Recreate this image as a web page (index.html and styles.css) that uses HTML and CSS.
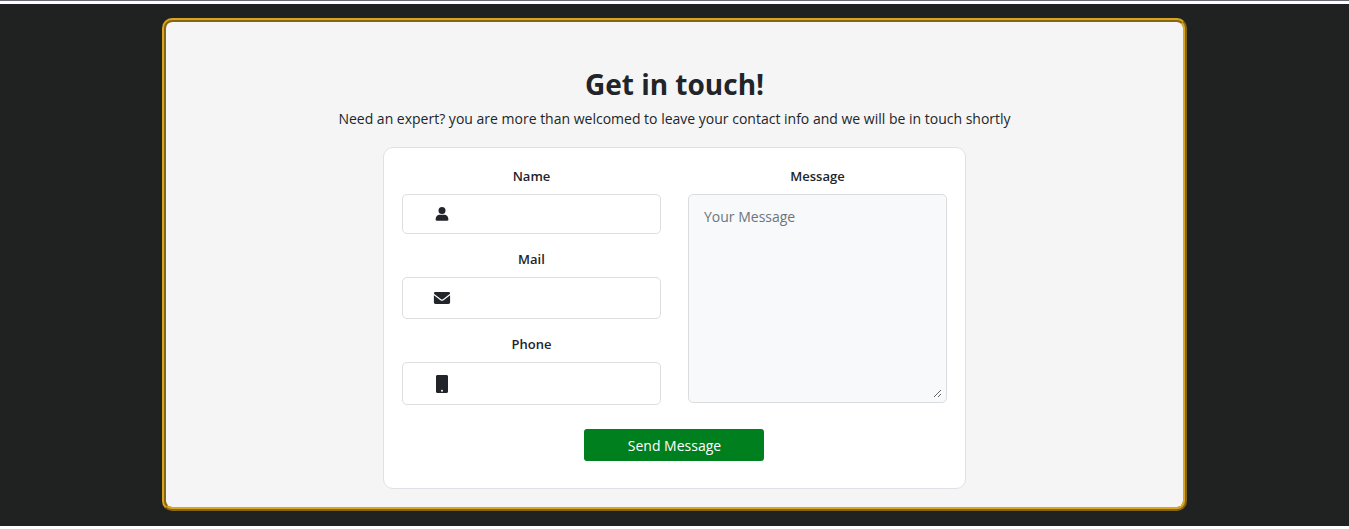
FILE: index.html
```html
<!DOCTYPE html>
<html lang="en">
<head>
<meta charset="utf-8">
<meta name="viewport" content="width=device-width, initial-scale=1">
<title>Get in touch</title>
<link rel="stylesheet" href="styles.css">
</head>
<body>
<main class="contact">
  <section class="panel">
    <h1 class="title">Get in touch!</h1>
    <p class="lead">Need an expert? you are more than welcomed to leave your contact info and we will be in touch shortly</p>
    <form class="card">
      <div class="columns">
        <div class="fields">
          <div class="field">
            <label class="label" for="name">Name</label>
            <div class="box box-name">
              <svg class="icon" viewBox="0 0 18 18" aria-hidden="true"><circle cx="9" cy="5.4" r="3.5"/><path d="M2.6 14.600c0-3 1.800-4.800 4.200-4.800h4.400c2.400 0 4.200 1.800 4.200 4.800 0 .8-.5 1.200-1.200 1.200H3.800c-.7 0-1.200-.4-1.200-1.200z"/></svg>
              <input class="input" id="name" type="text">
            </div>
          </div>
          <div class="field">
            <label class="label" for="mail">Mail</label>
            <div class="box box-mail">
              <svg class="icon" viewBox="0 0 18 18" aria-hidden="true"><path d="M2.300 3h13.400c.8 0 1.300.5 1.300 1.200 0 .5-.2.800-.6 1.100L9.900 10.300c-.6.400-1.200.4-1.800 0L1.600 5.300C1.200 5 1 4.700 1 4.200 1 3.500 1.500 3 2.300 3z"/><path d="M.9 6.300l6.500 5c1 .7 2.200.7 3.200 0l6.500-5v7c0 1.100-.7 1.700-1.700 1.700H2.600c-1 0-1.700-.6-1.700-1.700z"/></svg>
              <input class="input" id="mail" type="email">
            </div>
          </div>
          <div class="field">
            <label class="label" for="phone">Phone</label>
            <div class="box box-phone">
              <svg class="icon" viewBox="0 0 18 18" aria-hidden="true"><path fill-rule="evenodd" d="M4.500 0h9C14.400 0 15 .6 15 1.500v15c0 .9-.6 1.500-1.500 1.500h-9C3.600 18 3 17.400 3 16.500v-15C3 .6 3.600 0 4.500 0zM9 14.800a1 1 0 1 0 0 2 1 1 0 0 0 0-2z"/></svg>
              <input class="input" id="phone" type="tel">
            </div>
          </div>
        </div>
        <div class="field">
          <label class="label" for="message">Message</label>
          <div class="message-box">
            <textarea class="message" id="message" placeholder="Your Message"></textarea>
          </div>
        </div>
      </div>
      <button class="send" type="submit">Send Message</button>
    </form>
  </section>
</main>
</body>
</html>
```

FILE: styles.css
```css
* {
  box-sizing: border-box;
}

body {
  margin: 0;
  border-top: 1px solid #6c6870;
  background: #fff;
  color: #212529;
  font-family: "Open Sans", "Noto Sans", sans-serif;
  font-size: 14px;
  line-height: 21px;
}

.contact {
  margin-top: 3px;
  padding: 14px 0 15px;
  background: #1f2220;
}

.panel {
  width: 76%;
  margin: 0 auto;
  padding: 44px 18px 18px;
  border: 4px ridge goldenrod;
  border-radius: 10px;
  background: #f5f5f5;
  text-align: center;
}

.title {
  margin: 0 0 6px;
  font-size: 28px;
  font-weight: 700;
  line-height: 36px;
}

.lead {
  margin: 0 0 18px;
}

.card {
  max-width: 583px;
  margin: 0 auto;
  padding: 18px 18px 27px;
  border: 1px solid #dee2e6;
  border-radius: 10px;
  background: #fff;
}

.columns {
  display: grid;
  grid-template-columns: repeat(2, minmax(0, 1fr));
  align-items: start;
  gap: 27px;
}

.fields {
  display: grid;
  gap: 15px;
}

.field {
  display: grid;
  gap: 7px;
}

.label {
  font-weight: 600;
  font-size: 13px;
}

.box {
  display: flex;
  align-items: center;
  gap: 8px;
  padding: 0 12px 0 30px;
  border: 1px solid #dedede;
  border-radius: 5px;
}

.box-name {
  height: 40px;
}

.box-mail {
  height: 42px;
}

.box-phone {
  height: 43px;
}

.icon {
  flex: none;
  width: 18px;
  height: 18px;
  fill: #212529;
}

.input {
  flex: 1;
  min-width: 0;
  height: 30px;
  padding: 0;
  border: 0;
  outline: 0;
  background: transparent;
  color: inherit;
  font: inherit;
}

.message-box {
  padding: 4px;
  border: 1px solid #dadcde;
  border-radius: 5px;
  background: #f8f9fa;
}

.message {
  display: block;
  width: 100%;
  height: 199px;
  padding: 7px 11px;
  border: 0;
  outline: 0;
  background: transparent;
  color: inherit;
  font: inherit;
  resize: vertical;
}

.message::placeholder {
  color: #6c757d;
}

.send {
  display: block;
  width: 180px;
  height: 32px;
  margin: 24px auto 0;
  padding: 0;
  border: 0;
  border-radius: 3px;
  background: #007f1f;
  color: #fff;
  font: inherit;
}
```
